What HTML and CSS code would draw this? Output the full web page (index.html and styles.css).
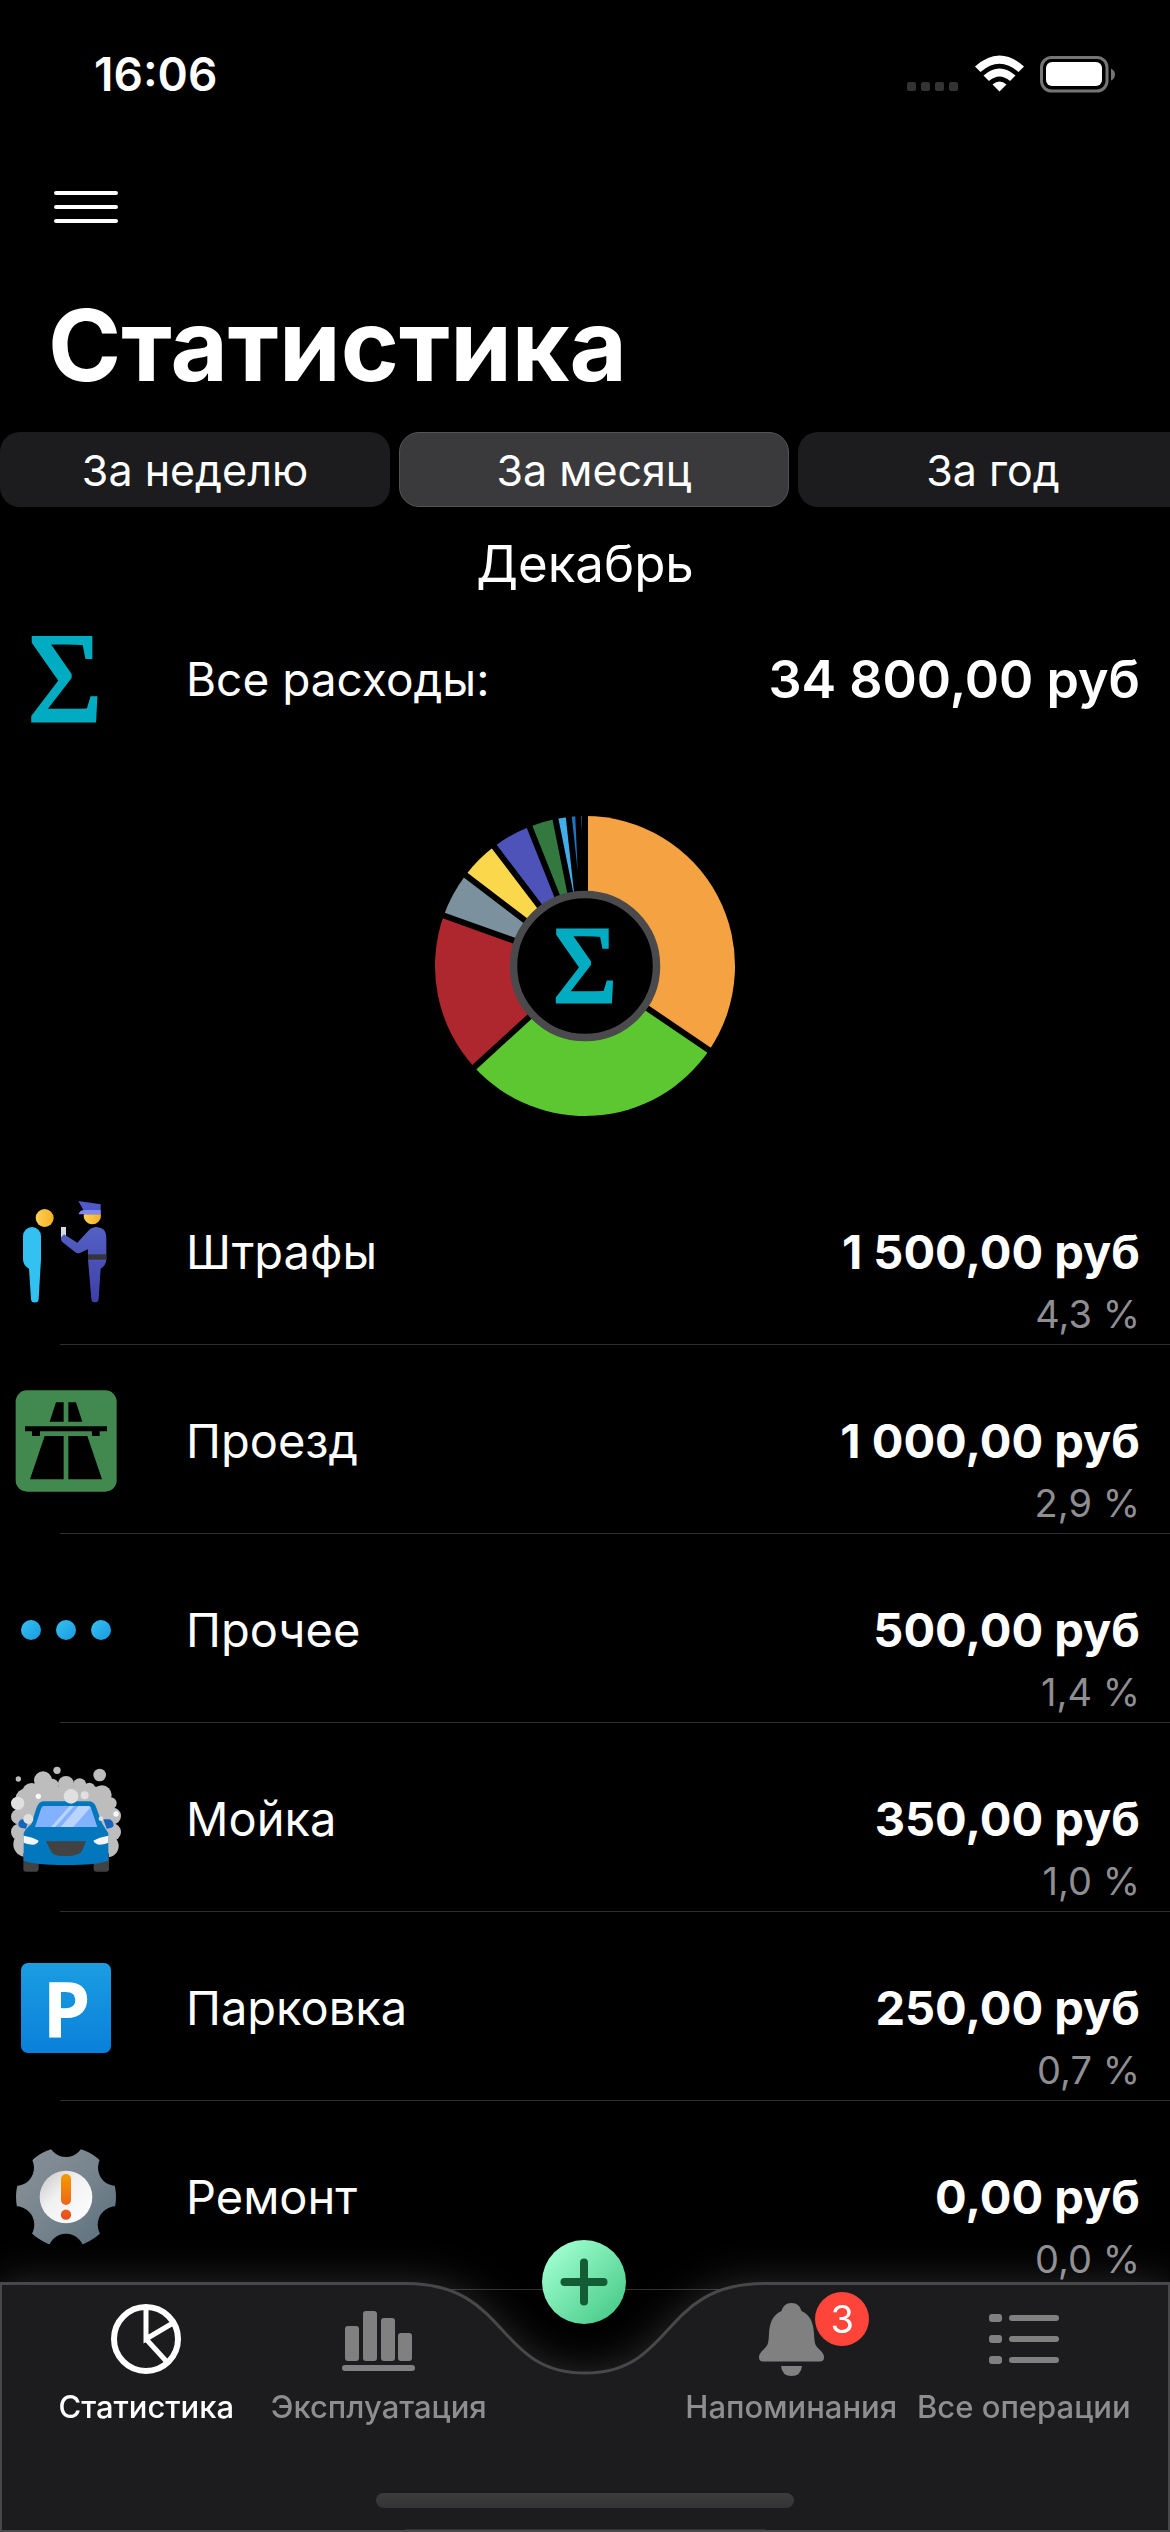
FILE: index.html
```html
<!DOCTYPE html>
<html lang="ru">
<head>
<meta charset="utf-8">
<meta name="viewport" content="width=device-width, initial-scale=1">
<title>Статистика</title>
<link rel="stylesheet" href="styles.css">
</head>
<body>
<header>
  <div class="status">
    <time class="clock">16:06</time>
    <svg class="status-icons" width="210" height="40" viewBox="906 54 210 40" aria-hidden="true">
      <g fill="#333335"><rect x="907" y="82" width="9" height="9" rx="2"/><rect x="921" y="82" width="9" height="9" rx="2"/><rect x="935" y="82" width="9" height="9" rx="2"/><rect x="949" y="82" width="9" height="9" rx="2"/></g>
      <g fill="#fff">
        <path d="M975 66.500Q999.500 44.500 1024 66.500L1018.500 72Q999.500 55.500 980.500 72Z"/>
        <path d="M983.500 75.500Q999.500 61.500 1015.500 75.500L1010 81Q999.500 72 989 81Z"/>
        <path d="M992.500 84.500Q999.500 78.500 1006.500 84.500L999.500 91.500Z"/>
        <rect x="1046" y="62" width="56" height="24" rx="6"/>
      </g>
      <rect x="1041.500" y="57.500" width="65.500" height="33.500" rx="10" fill="none" stroke="#757577" stroke-width="3"/>
      <path d="M1111 68.500Q1115 70.500 1115 74.500T1111 80.500Z" fill="#757577"/>
    </svg>
  </div>
  <button class="menu" type="button" aria-label="Меню">
    <svg width="66" height="36" viewBox="0 0 66 36"><path d="M3 4H63M3 18H63M3 32H63" stroke="#fff" stroke-width="4" stroke-linecap="round"/></svg>
  </button>
  <h1>Статистика</h1>
</header>
<main>
  <div class="periods">
    <button class="period" type="button">За неделю</button>
    <button class="period active" type="button" aria-pressed="true">За месяц</button>
    <button class="period" type="button">За год</button>
  </div>
  <h2>Декабрь</h2>
  <div class="summary">
    <svg class="icon" viewBox="0 0 120 120" aria-hidden="true"><text class="sigma" x="59" y="102" font-size="128" text-anchor="middle">Σ</text></svg>
    <span>Все расходы:</span>
    <strong>34&nbsp;800,00 руб</strong>
  </div>
  <svg class="chart" viewBox="-160 -160 320 320" role="img" aria-label="Расходы по категориям">
    <g id="slices"></g>
    <circle r="71.500" fill="#000" stroke="#4a4a4c" stroke-width="7.500"/>
    <text class="sigma" x="0" y="36" font-size="110" text-anchor="middle">Σ</text>
  </svg>
  <ul class="costs">
    <li>
      <svg class="icon" viewBox="18 36 360 360" aria-hidden="true">
        <defs>
          <linearGradient id="skin"><stop stop-color="#ffd054"/><stop offset="1" stop-color="#f3b226"/></linearGradient>
          <linearGradient id="coat" x2="0" y2="1"><stop stop-color="#5560c4"/><stop offset="1" stop-color="#3c40a8"/></linearGradient>
        </defs>
        <circle cx="134" cy="114" r="27" fill="url(#skin)"/>
        <path d="M69 168a27 27 0 0 1 54 0v70L116 356a11 11 0 0 1-23 0L87 266Q69 256 69 238Z" fill="#33c1f2"/>
        <circle cx="277" cy="107" r="26" fill="url(#skin)"/>
        <path d="M235 63L302 73V103H250V90Z" fill="#5059c9"/>
        <path d="M236 103Q238 90 255 90H302V103Z" fill="#8088ee"/>
        <path d="M183 141H198V172H183Z" fill="#d3dbe2"/>
        <path d="M290 141Q319 143 319 172V238Q318 257 302 266L296 356a11 11 0 0 1-22 0L264 238V208L240 219Q232 222 224 215L188 187Q182 181 183 172L192 163L232 188L265 152Q275 141 290 141Z" fill="url(#coat)"/>
        <path d="M264 223H319V239H264Z" fill="#353538"/>
      </svg>
      <span>Штрафы</span>
      <div class="amount"><strong>1&nbsp;500,00 руб</strong><small>4,3 %</small></div>
    </li>
    <li>
      <svg class="icon" viewBox="18 603 360 360" aria-hidden="true">
        <rect x="47" y="631" width="303" height="304" rx="34" fill="#42894f"/>
        <path d="M168 667H191V725H149ZM205 667H228L247 725H205ZM75 739H321V754H299V768H276V754H120V768H96V754H75ZM134 768H191V898H90ZM205 768H262L306 898H205Z" fill="#000"/>
      </svg>
      <span>Проезд</span>
      <div class="amount"><strong>1&nbsp;000,00 руб</strong><small>2,9 %</small></div>
    </li>
    <li>
      <svg class="icon" viewBox="18 30 360 360" aria-hidden="true">
        <defs><linearGradient id="dot" x2="1" y2="1"><stop stop-color="#35c1f1"/><stop offset="1" stop-color="#199ae0"/></linearGradient></defs>
        <g fill="url(#dot)"><circle cx="93" cy="210" r="30"/><circle cx="198" cy="210" r="30"/><circle cx="303" cy="210" r="30"/></g>
      </svg>
      <span>Прочее</span>
      <div class="amount"><strong>500,00 руб</strong><small>1,4 %</small></div>
    </li>
    <li>
      <svg class="icon" viewBox="18 57 360 360" aria-hidden="true">
        <g fill="#bdbdbd">
          <circle cx="55" cy="117" r="8"/><circle cx="171" cy="91" r="11"/><circle cx="299" cy="105" r="19"/>
          <circle cx="129" cy="121" r="27"/><circle cx="198" cy="132" r="24"/><circle cx="239" cy="135" r="20"/><circle cx="156" cy="136" r="20"/><circle cx="268" cy="146" r="18"/><circle cx="306" cy="165" r="29"/><circle cx="95" cy="158" r="29"/><circle cx="76" cy="175" r="29"/>
          <circle cx="56" cy="230" r="23"/><circle cx="58" cy="276" r="25"/><circle cx="78" cy="313" r="38"/><circle cx="332" cy="190" r="18"/><circle cx="338" cy="228" r="25"/><circle cx="336" cy="276" r="27"/><circle cx="322" cy="318" r="34"/>
          <path d="M60 180L100 140H300L340 200V300H60Z"/>
        </g>
        <path d="M70 340H116V388Q116 395 109 395H77Q70 395 70 388ZM281 340H327V388Q327 395 320 395H288Q281 395 281 388Z" fill="#424242"/>
        <path d="M86 238H66Q54 242 55 256Q58 266 78 266ZM310 238H328Q340 242 341 256Q338 266 320 266Z" fill="#1565c0"/>
        <path d="M131 184H266Q281 184 287 198L306 250L325 280V362Q290 375 198 375T71 362V280Q76 266 94 252L109 205Q116 184 131 184Z" fill="#0277bd"/>
        <path d="M132 198H264Q270 198 273 204L292 261H105L124 204Q127 198 132 198Z" fill="#82b1ff"/>
        <path d="M209 198H222L166 261H153ZM236 198H264Q270 198 272 202L220 261H182Z" fill="#bbd3ff"/>
        <path d="M71 287Q100 292 116 302Q112 313 98 314Q80 313 71 308ZM325 287Q297 292 280 302Q286 313 300 314Q317 313 325 308Z" fill="#f5f5f5"/>
        <path d="M138 304H258L246 332Q240 347 198 348T152 332Z" fill="#424242"/>
        <g fill="#e0e0e0"><circle cx="53" cy="190" r="20"/><circle cx="85" cy="237" r="15"/><circle cx="213" cy="169" r="22"/><circle cx="254" cy="166" r="12"/><circle cx="303" cy="236" r="7"/></g>
        <circle cx="115" cy="169" r="8" fill="#fafafa"/><circle cx="348" cy="222" r="8" fill="#fafafa"/>
      </svg>
      <span>Мойка</span>
      <div class="amount"><strong>350,00 руб</strong><small>1,0 %</small></div>
    </li>
    <li>
      <svg class="icon" viewBox="18 54 360 360" aria-hidden="true">
        <defs><linearGradient id="park" x2="0" y2="1"><stop stop-color="#1b9de2"/><stop offset="1" stop-color="#0a80da"/></linearGradient></defs>
        <rect x="63" y="99" width="270" height="270" rx="21" fill="url(#park)"/>
        <text class="park" x="200" y="323" text-anchor="middle">P</text>
      </svg>
      <span>Парковка</span>
      <div class="amount"><strong>250,00 руб</strong><small>0,7 %</small></div>
    </li>
    <li>
      <svg class="icon" viewBox="18 621 360 360" aria-hidden="true">
        <defs>
          <linearGradient id="gear" x2="1" y2="1"><stop stop-color="#889097"/><stop offset=".5" stop-color="#78858e"/><stop offset="1" stop-color="#576d7b"/></linearGradient>
          <linearGradient id="hub" x2="1" y2="1"><stop stop-color="#c4c4c4"/><stop offset=".4" stop-color="#f1f1f1"/><stop offset="1" stop-color="#fff"/></linearGradient>
          <linearGradient id="alert" gradientUnits="userSpaceOnUse" x1="0" x2="0" y1="732" y2="869"><stop stop-color="#f59a00"/><stop offset="1" stop-color="#e84e20"/></linearGradient>
          <mask id="teeth" maskUnits="userSpaceOnUse" x="18" y="621" width="360" height="360">
            <path d="M18 621H378V981H18Z" fill="#fff"/>
            <circle cx="198" cy="627" r="54"/><circle cx="198" cy="965" r="54"/><circle cx="47" cy="713" r="55"/><circle cx="349" cy="713" r="55"/><circle cx="48" cy="884" r="55"/><circle cx="348" cy="884" r="55"/>
          </mask>
        </defs>
        <circle cx="198" cy="801" r="150" fill="url(#gear)" mask="url(#teeth)"/>
        <circle cx="198" cy="801" r="79" fill="url(#hub)"/>
        <rect x="183" y="732" width="30" height="93" rx="15" fill="url(#alert)"/><circle cx="198" cy="854" r="15.500" fill="url(#alert)"/>
      </svg>
      <span>Ремонт</span>
      <div class="amount"><strong>0,00 руб</strong><small>0,0 %</small></div>
    </li>
  </ul>
</main>
<nav class="tabbar">
  <div class="tabbar-shape" aria-hidden="true">
    <div class="side left"></div>
    <svg width="360" height="250" viewBox="0 0 360 250">
      <path d="M0 1H1C105 1 90 92 180 92S255 1 359 1H360V250H0Z" fill="#1c1c1e"/>
      <path d="M0 1.500H1C105 1.500 90 91 180 91S255 1.500 359 1.500H360M0 249H360" fill="none" stroke="#48484a" stroke-width="3"/>
    </svg>
    <div class="side right"></div>
  </div>
  <button class="add" type="button" aria-label="Добавить">
    <svg width="50" height="50" viewBox="0 0 50 50"><path d="M25 5.500V44.500M5.500 25H44.500" stroke="#145c35" stroke-width="8" stroke-linecap="round"/></svg>
  </button>
  <div class="tabs">
    <a class="tab current" href="#stats" aria-current="page">
      <svg width="80" height="80" viewBox="0 0 80 80" fill="none" stroke="#fff"><circle cx="40" cy="40" r="32" stroke-width="6"/><path d="M40 8V40L67 24M40 40L61 63" stroke-width="5"/></svg>
      <span>Статистика</span>
    </a>
    <a class="tab" href="#usage">
      <svg width="80" height="80" viewBox="0 0 80 80" fill="#808080"><rect x="6" y="27" width="14" height="35" rx="3"/><rect x="24" y="12" width="14" height="50" rx="3"/><rect x="42" y="19" width="14" height="43" rx="3"/><rect x="59" y="34" width="14" height="28" rx="3"/><rect x="3" y="66" width="73" height="6" rx="3"/></svg>
      <span>Эксплуатация</span>
    </a>
    <a class="tab third" href="#reminders">
      <svg width="80" height="80" viewBox="0 0 80 80" fill="#808080"><path d="M40.500 4C46 4 49 7 50.500 12C60 16 62.500 25 63 35C63.500 44 64 46 67 49C71 53 73 55 73 58.500Q73 62.500 69 62.500H12Q8 62.500 8 58.500C8 55 10 53 14 49C17 46 17.500 44 18 35C18.500 25 21 16 30.500 12C32 7 35 4 40.500 4Z"/><path d="M30 67H51Q50 77 40.500 77T30 67Z"/></svg>
      <span>Напоминания</span>
      <b class="badge">3</b>
    </a>
    <a class="tab" href="#operations">
      <svg width="80" height="80" viewBox="0 0 80 80" fill="#808080"><rect x="5" y="15" width="13" height="8" rx="3"/><rect x="5" y="36" width="13" height="8" rx="3"/><rect x="5" y="57" width="13" height="8" rx="3"/><rect x="25" y="16" width="50" height="6" rx="3"/><rect x="25" y="37" width="50" height="6" rx="3"/><rect x="25" y="58" width="50" height="6" rx="3"/></svg>
      <span>Все операции</span>
    </a>
  </div>
  <div class="home-indicator"></div>
</nav>
<script src="chart.js"></script>
</body>
</html>
```
FILE: styles.css
```css
* { box-sizing: border-box; }
body {
  margin: 0;
  min-height: 100vh;
  background: #000;
  color: #fff;
  font-family: Inter, "Liberation Sans", sans-serif;
  font-size: 46px;
  overflow-x: hidden;
}
button { border: 0; padding: 0; background: none; color: inherit; font: inherit; }
svg { display: block; overflow: visible; }
h1, h2 { margin: 0; }

.status {
  display: flex;
  align-items: center;
  justify-content: space-between;
  height: 148px;
  padding: 0 54px 0 94px;
}
.clock { font-weight: 600; }
.menu { display: flex; align-items: center; height: 118px; padding: 0 53px; }
h1 {
  margin-top: 19px;
  padding: 0 48px;
  font-size: 99px;
  line-height: 120px;
  font-weight: 700;
}

.periods { display: flex; gap: 9px; margin-top: 27px; overflow: hidden; }
.period {
  flex: 0 0 calc(100% / 3);
  height: 75px;
  border-radius: 20px;
  background: #1c1c1e;
  font-size: 43px;
}
.period.active { background: #3a3a3c; border: 1px solid #545456; }
h2 {
  margin-top: 25px;
  font-size: 51px;
  line-height: 64px;
  font-weight: 400;
  text-align: center;
}

.summary {
  display: grid;
  grid-template-columns: 180px 1fr auto;
  align-items: center;
  height: 120px;
  margin-top: 23px;
  padding: 0 30px 0 6px;
}
.summary strong { font-size: 52px; font-weight: 600; }
.icon { width: 120px; height: 120px; }
.sigma {
  font-family: "Liberation Serif", serif;
  fill: #00acc1;
  stroke: #00acc1;
  stroke-width: 3px;
}
.park { font-family: "Noto Sans", sans-serif; font-size: 230px; font-weight: 700; fill: #fff; }
.chart { width: 320px; height: 320px; margin: 67px auto 30px; }

.costs { list-style: none; margin: 0; padding: 0; }
.costs li {
  display: grid;
  grid-template-columns: 180px 1fr auto;
  height: 189px;
  padding: 64px 30px 0 6px;
  font-size: 47px;
  line-height: 64px;
  background: linear-gradient(#303032, #303032) 60px 100% / 100% 1px no-repeat;
}
.costs .icon { margin-top: -28px; }
.amount { display: flex; flex-direction: column; align-items: flex-end; }
.amount strong { font-weight: 700; }
.amount small { font-size: 38px; line-height: 60px; color: #8e8e93; }

.tabbar { position: fixed; left: 0; right: 0; bottom: 0; height: 250px; }
.tabbar-shape {
  position: absolute;
  inset: 0;
  display: grid;
  grid-template-columns: 1fr 360px 1fr;
  filter: drop-shadow(0 0 20px rgba(255, 255, 255, 0.17));
}
.side { background: #1c1c1e; border: solid #48484a; border-width: 3px 0 2px; }
.left { border-left-width: 2px; }
.right { border-right-width: 2px; }
.add {
  position: absolute;
  left: 50%;
  top: -42px;
  display: grid;
  place-items: center;
  width: 84px;
  height: 84px;
  margin-left: -43px;
  border-radius: 50%;
  background: linear-gradient(135deg, #a0ffd0 10%, #4acb8b 90%);
}
.tabs {
  position: relative;
  display: grid;
  grid-template-columns: 1fr 1fr 180px 1fr 1fr;
  padding: 17px 30px 0;
}
.tab {
  position: relative;
  display: flex;
  flex-direction: column;
  align-items: center;
  gap: 10px;
  color: #8e8e8f;
  font-size: 31px;
  line-height: 36px;
  font-weight: 500;
  text-decoration: none;
  white-space: nowrap;
}
.tab.current { color: #fff; }
.third { grid-column: 4; }
.badge {
  position: absolute;
  left: calc(50% + 24px);
  top: -7px;
  width: 54px;
  height: 54px;
  border-radius: 50%;
  background: #ff453a;
  color: #fff;
  font-size: 38px;
  font-weight: 400;
  line-height: 54px;
  text-align: center;
}
.home-indicator {
  position: relative;
  width: 418px;
  height: 15px;
  margin: 68px auto 0;
  border-radius: 8px;
  background: linear-gradient(#3c3c3c, #333);
}
```
FILE: chart.js
```js
const costs = [
  [12000, '#f5a243'], [10000, '#5dc732'], [6000, '#ae272f'], [1700, '#7b929e'],
  [1500, '#fbd74b'], [1500, '#4e53b9'], [1000, '#33783f'], [500, '#43ade9'],
  [350, '#1f74bd'], [250, '#2f6ea8']
];
const total = costs.reduce((sum, [value]) => sum + value, 0);
const radius = 150;
const point = (value) => {
  const angle = value / total * 2 * Math.PI;
  return `${radius * Math.sin(angle)} ${-radius * Math.cos(angle)}`;
};
let start = 0;
let slices = '';
let gaps = '';
for (const [value, color] of costs) {
  const end = start + value;
  slices += `<path d="M0 0L${point(start)}A${radius} ${radius} 0 0 1 ${point(end)}Z" fill="${color}"/>`;
  gaps += `M0 0L${point(end)}`;
  start = end;
}
document.getElementById('slices').innerHTML = slices + `<path d="${gaps}" stroke="#000" stroke-width="6" stroke-linecap="square"/>`;
```
